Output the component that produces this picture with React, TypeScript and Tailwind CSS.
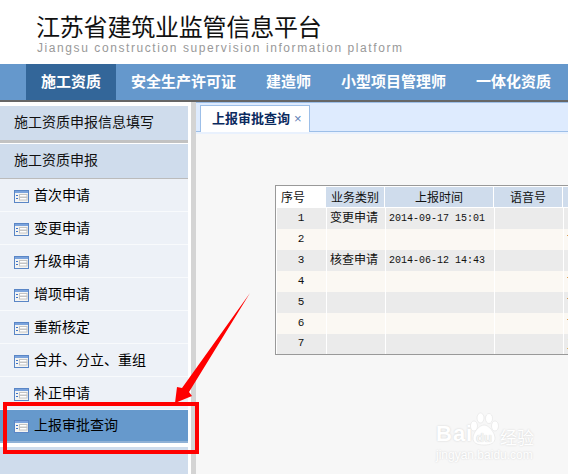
const cjk = "font-['Noto_Sans_CJK_SC','Liberation_Sans',sans-serif]";

const NAV = ["施工资质", "安全生产许可证", "建造师", "小型项目管理师", "一体化资质"];
const ITEMS = ["首次申请", "变更申请", "升级申请", "增项申请", "重新核定", "合并、分立、重组", "补正申请"];
const ROWS: [string, string, string, string][] = [
  ["1", "变更申请", "2014-09-17 15:01", ""],
  ["2", "", "", "下"],
  ["3", "核查申请", "2014-06-12 14:43", ""],
  ["4", "", "", "下"],
  ["5", "", "", "下"],
  ["6", "", "", "下"],
  ["7", "", "", "三"],
];

function FormIcon() {
  return (
    <svg width="15" height="13" viewBox="0 0 15 13" className="shrink-0 mt-[4px]">
      <rect x="0.5" y="0.5" width="14" height="12" fill="#f4f4f2" stroke="#5a86c6" />
      <rect x="1" y="1" width="13" height="2" fill="#7ba3dc" />
      <rect x="2" y="5" width="2" height="1" fill="#3f74c8" />
      <rect x="2" y="8" width="2" height="1" fill="#3f74c8" />
      <rect x="5.5" y="4.5" width="7.5" height="2.5" fill="#ffffff" stroke="#c4c4c4" />
      <rect x="5.5" y="7.5" width="7.5" height="2.5" fill="#ffffff" stroke="#c4c4c4" />
    </svg>
  );
}

function SideItem({ label, active }: { label: string; active?: boolean }) {
  return (
    <div
      className={
        active
          ? "flex items-center h-[33px] pl-[14px] pb-[2px] gap-[5px] bg-[#6699cc] border-b-2 border-[#8fb1d6] text-[14px] text-black"
          : "flex items-center h-[33px] pl-[14px] pb-[2px] gap-[5px] bg-[#edf1f7] border-b border-[#f8fafc] text-[14px] text-black"
      }
    >
      <FormIcon />
      <span>{label}</span>
    </div>
  );
}

function Sidebar() {
  return (
    <div className="w-[188px] shrink-0 pt-[4px] bg-white">
      <div className="h-[37px] pl-[14px] pb-[3px] flex items-center bg-[#cfdcec] border-b-[3px] border-[#c2c2c2] text-[14px] text-[#111]">
        施工资质申报信息填写
      </div>
      <div className="mt-px h-[35px] pl-[14px] pb-[3px] flex items-center bg-[#cfdcec] border-b border-[#bbbbbb] text-[14px] text-[#111]">
        施工资质申报
      </div>
      {ITEMS.map((t) => (
        <SideItem key={t} label={t} />
      ))}
      <SideItem label="上报审批查询" active />
      <div className="h-[4px] bg-white" />
      <div className="h-[27px] bg-[#cfdcec]" />
    </div>
  );
}

function QueryTable() {
  const cell = "flex items-center";
  return (
    <div className="w-[320px] ml-[79px] mt-[51px] border border-[#999999] bg-white p-px pr-0 pb-0 text-[12px] text-[#111]">
      <div className="grid grid-cols-[48px_58px_108px_68px_40px] gap-x-px h-[20px] mb-px">
        <div className={cell + " bg-white pl-[4px] pb-px"}>序号</div>
        <div className={cell + " bg-[#cfdcec] justify-center pb-px"}>业务类别</div>
        <div className={cell + " bg-[#cfdcec] justify-center pb-px"}>上报时间</div>
        <div className={cell + " bg-[#cfdcec] justify-center pb-px"}>语音号</div>
        <div className="bg-[#cfdcec]" />
      </div>
      {ROWS.map((r, i) => (
        <div
          key={r[0]}
          className={
            i % 2 === 0
              ? "grid grid-cols-[48px_58px_108px_68px_40px] gap-x-px h-[21px] last:h-[20px] bg-[#ebebeb]"
              : "grid grid-cols-[48px_58px_108px_68px_40px] gap-x-px h-[21px] bg-[#fbf8f3]"
          }
        >
          <div className={cell + " justify-center pb-px font-['Liberation_Mono',monospace] text-[11px]"}>{r[0]}</div>
          <div className={cell + " pl-[3px] pb-[3px] border-l border-white"}>{r[1]}</div>
          <div className={cell + " pl-[3px] pb-px border-l border-white font-['Liberation_Mono',monospace] text-[10px]"}>{r[2]}</div>
          <div className="border-l border-white" />
          <div className={cell + " pl-[3px] border-l border-white"}>{r[3]}</div>
        </div>
      ))}
    </div>
  );
}

function Watermark() {
  return (
    <div className="absolute left-[434px] top-[412px] w-[104px] h-[50px] text-white [text-shadow:0_0_2px_#cfcfcf] pointer-events-none">
      <div className="absolute left-[2px] top-[10px] text-[22px] leading-[24px] tracking-[1px] font-bold font-['Liberation_Sans',sans-serif]">Bai</div>
      <svg width="30" height="34" viewBox="0 0 30 34" className="absolute left-[35px] top-0">
        <g fill="#ffffff" stroke="#e2e2e2" strokeWidth="0.6">
          <ellipse cx="5" cy="14" rx="3.5" ry="5" />
          <ellipse cx="11.5" cy="6" rx="3.5" ry="5" />
          <ellipse cx="20" cy="6.5" rx="3.5" ry="5" />
          <ellipse cx="26" cy="14" rx="3.5" ry="5" />
          <path d="M15 13c5 0 11 8 11 13 0 5-4 7-11 7s-11-2-11-7c0-5 6-13 11-13z" />
        </g>
      </svg>
      <div className="absolute left-[42px] top-[19px] text-[13px] leading-[14px] font-bold text-[#f4f4f4] [text-shadow:0_0_1px_#c8c8c8] font-['Liberation_Sans',sans-serif]">du</div>
      <div className={"absolute left-[66px] top-[15px] text-[17px] leading-[20px] whitespace-nowrap " + cjk}>经验</div>
      <div className="absolute left-[2px] top-[37px] text-[12px] leading-[12px] whitespace-nowrap font-['Liberation_Sans',sans-serif]">jingyan.baidu.com</div>
    </div>
  );
}

export default function App() {
  return (
    <div className={"relative w-[568px] h-[474px] overflow-hidden bg-white " + cjk}>
      {/* Header */}
      <div className="h-[64px] pl-[37px] pt-[12px] bg-white">
        <div className="-ml-px text-[24px] leading-[28px] tracking-[-0.2px] text-[#111] whitespace-nowrap">江苏省建筑业监管信息平台</div>
        <div className="mt-px text-[12px] leading-[14px] tracking-[1.58px] text-[#999999] whitespace-nowrap font-['Liberation_Sans',sans-serif]">
          Jiangsu construction supervision information platform
        </div>
      </div>

      {/* Nav */}
      <div className="h-[38px] pl-[26px] flex bg-[#6598cc] border-b-2 border-[#666666]">
        {NAV.map((t, i) => (
          <div
            key={t}
            className={
              i === 0
                ? "h-[36px] px-[15px] pb-[2px] flex items-center bg-[#336699] text-white text-[15px] font-bold whitespace-nowrap"
                : "h-[36px] px-[15px] pb-[2px] flex items-center text-white text-[15px] font-bold whitespace-nowrap"
            }
          >
            {t}
          </div>
        ))}
      </div>

      <div className="flex h-[372px]">
        <Sidebar />
        <div className="w-[3px] bg-white shrink-0" />
        <div className="w-[5px] bg-[#d4d4d4] shrink-0" />

        {/* Main */}
        <div className="flex-1 min-w-0 bg-[#f7f7f7] overflow-hidden">
          <div className="h-[30px] pl-[4px] pt-[2px] bg-[#deebfe] border-t border-b border-[#9dbfe8]">
            <div className="relative w-[110px] h-[27px] pl-[11px] pb-[2px] flex items-center gap-[4px] bg-white border-l border-r border-t border-[#9dbfe8] text-[13px] font-bold text-[#0b2a5e]">
              <span className="whitespace-nowrap">上报审批查询</span>
              <span className="text-[#5f7fb5] text-[13px] font-normal leading-none font-['Liberation_Sans',sans-serif]">×</span>
            </div>
          </div>
          <div className="h-[2px] bg-[#e9f1fd]" />
          <QueryTable />
        </div>
      </div>

      <Watermark />

      {/* Annotation: red arrow and box */}
      <svg width="85" height="115" viewBox="170 290 85 115" className="absolute left-[170px] top-[290px] pointer-events-none">
        <polygon points="250,293 189,392 192,396 175,403 177,387 182,388" fill="#ff0000" />
      </svg>
      <div className="absolute left-[3px] top-[402px] w-[196px] h-[52px] border-4 border-[#ff0000] pointer-events-none" />
    </div>
  );
}
